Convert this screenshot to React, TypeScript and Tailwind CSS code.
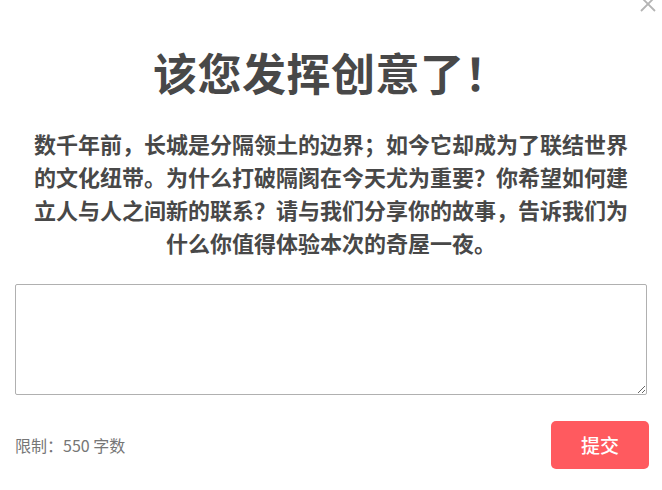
import React from "react";

export default function App() {
  return (
    <div
      className="relative w-[662px] h-[490px] bg-white overflow-hidden px-[15px]"
      style={{ fontFamily: '"Noto Sans CJK SC", "Noto Sans", sans-serif' }}
    >
      <button className="absolute right-[5px] top-[-5px] w-[18px] h-[18px] flex items-center justify-center">
        <svg width="16" height="16" viewBox="0 0 16 16">
          <path d="M1 1 L15 15 M15 1 L1 15" stroke="#b4b4b4" strokeWidth="1.8" fill="none" />
        </svg>
      </button>
      <h1 className="pt-[46px] text-center text-[44px] leading-[53px] font-bold text-[#484848] tracking-[0.5px]">
        该您发挥创意了！
      </h1>
      <p className="mt-[28px] mx-[9px] text-center text-[22px] leading-[33px] font-semibold text-[#484848]">
        数千年前，长城是分隔领土的边界；如今它却成为了联结世界的文化纽带。为什么打破隔阂在今天尤为重要？你希望如何建立人与人之间新的联系？请与我们分享你的故事，告诉我们为什么你值得体验本次的奇屋一夜。
      </p>
      <textarea className="mt-[25px] block w-full h-[111px] border border-[#b0b0b0] rounded-[2px] resize-y outline-none" />
      <div className="mt-[26px] flex items-center justify-between">
        <span className="text-[16px] text-[#767676]">限制：550 字数</span>
        <button className="w-[98px] h-[48px] rounded-[5px] bg-[#ff5a5f] text-white text-[19px] font-medium mr-[-2px]">
          提交
        </button>
      </div>
    </div>
  );
}
